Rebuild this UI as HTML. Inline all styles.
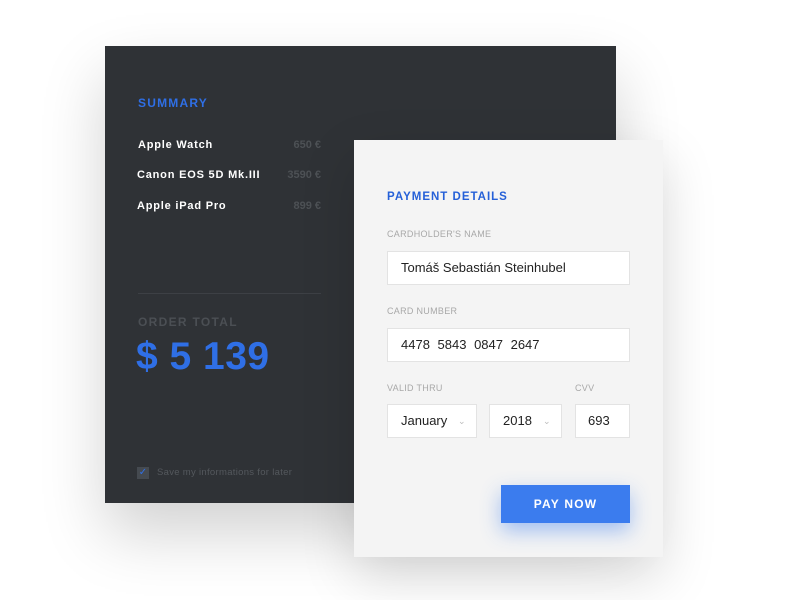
<!DOCTYPE html>
<html><head><style>
*{margin:0;padding:0;box-sizing:border-box}
body{width:800px;height:600px;background:#fff;position:relative;overflow:hidden;font-family:"Liberation Sans",sans-serif}
.dark{position:absolute;left:105px;top:46px;width:511px;height:457px;background:#2f3236;box-shadow:0 30px 60px rgba(0,0,0,.18)}
.abs{position:absolute;white-space:nowrap}
.light{position:absolute;left:354px;top:140px;width:309px;height:417px;background:#f4f4f4;box-shadow:0 20px 50px rgba(0,0,0,.15)}
.item{color:#fff;font-size:11px;font-weight:bold;letter-spacing:.8px}
.price{color:#4d5155;font-size:11px;font-weight:bold;text-align:right;width:80px}
.lbl{color:#a8a8a8;font-size:9px;letter-spacing:.3px}
.inp{position:absolute;background:#fff;border:1px solid #e3e3e3;height:34px;font-size:13px;color:#222;line-height:32px;padding-left:13px}
.chev{position:absolute;top:0;color:#bbb;font-size:9px}
</style></head><body>
<div class="dark">
<div class="abs" style="left:33px;top:50px;color:#2f6fe6;font-size:12px;font-weight:bold;letter-spacing:1.2px">SUMMARY</div>
<div class="abs item" style="left:33px;top:93px">Apple Watch</div>
<div class="abs price" style="left:136px;top:93px">650 €</div>
<div class="abs item" style="left:32px;top:123px">Canon EOS 5D Mk.III</div>
<div class="abs price" style="left:136px;top:123px">3590 €</div>
<div class="abs item" style="left:32px;top:154px">Apple iPad Pro</div>
<div class="abs price" style="left:136px;top:154px">899 €</div>
<div class="abs" style="left:33px;top:247px;width:183px;height:1px;background:#3d4045"></div>
<div class="abs" style="left:33px;top:269px;color:#4b4f54;font-size:12px;font-weight:bold;letter-spacing:1.3px">ORDER TOTAL</div>
<div class="abs" style="left:31px;top:289px;color:#2f6fe6;font-size:39px;font-weight:bold;letter-spacing:.5px">$ 5 139</div>
<div class="abs" style="left:32px;top:421px;width:12px;height:12px;background:#454a50;color:#2f6fe6;font-size:10px;line-height:12px;text-align:center">✓</div>
<div class="abs" style="left:52px;top:421px;color:#54585d;font-size:9.5px;letter-spacing:.3px">Save my informations for later</div>
</div>
<div class="light">
<div class="abs" style="left:33px;top:51px;color:#2560d8;font-size:11.5px;font-weight:bold;letter-spacing:1px">PAYMENT DETAILS</div>
<div class="abs lbl" style="left:33px;top:89px">CARDHOLDER'S NAME</div>
<div class="inp" style="left:33px;top:111px;width:243px">Tomáš Sebastián Steinhubel</div>
<div class="abs lbl" style="left:33px;top:166px">CARD NUMBER</div>
<div class="inp" style="left:33px;top:188px;width:243px;word-spacing:4px">4478 5843 0847 2647</div>
<div class="abs lbl" style="left:33px;top:243px">VALID THRU</div>
<div class="abs lbl" style="left:221px;top:243px">CVV</div>
<div class="inp" style="left:33px;top:264px;width:90px">January<span class="chev" style="left:70px">⌄</span></div>
<div class="inp" style="left:135px;top:264px;width:73px">2018<span class="chev" style="left:53px">⌄</span></div>
<div class="inp" style="left:221px;top:264px;width:55px;padding-left:12px">693</div>
<div class="abs" style="left:147px;top:345px;width:129px;height:38px;background:#3b7cee;color:#fff;font-size:12px;font-weight:bold;letter-spacing:1.2px;text-align:center;line-height:38px;box-shadow:0 8px 20px rgba(59,124,238,.45)">PAY NOW</div>
</div>
</body></html>
